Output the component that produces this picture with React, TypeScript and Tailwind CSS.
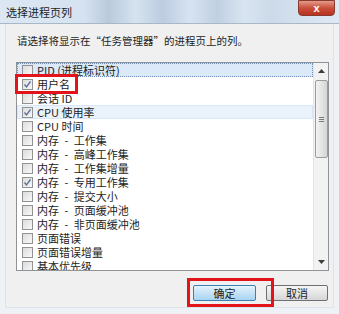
import { FC } from "react";

type Row = { label: string; checked?: boolean; selected?: boolean; hover?: boolean };

const rows: Row[] = [
  { label: "PID (进程标识符)", selected: true },
  { label: "用户名", checked: true },
  { label: "会话 ID" },
  { label: "CPU 使用率", checked: true, hover: true },
  { label: "CPU 时间" },
  { label: "内存\u2002-\u2002工作集" },
  { label: "内存\u2002-\u2002高峰工作集" },
  { label: "内存\u2002-\u2002工作集增量" },
  { label: "内存\u2002-\u2002专用工作集", checked: true },
  { label: "内存\u2002-\u2002提交大小" },
  { label: "内存\u2002-\u2002页面缓冲池" },
  { label: "内存\u2002-\u2002非页面缓冲池" },
  { label: "页面错误" },
  { label: "页面错误增量" },
  { label: "基本优先级" },
];

const CheckBox: FC<{ checked?: boolean }> = ({ checked }) => (
  <div className="w-[11px] h-[11px] shrink-0 border border-[#939393] bg-[linear-gradient(135deg,#dcdcdc,#f8f8f8)] flex items-center justify-center">
    {checked && (
      <svg width="9" height="9" viewBox="0 0 9 9">
        <polyline points="1.5,4.5 3.5,7 7.5,1.5" fill="none" stroke="#5a6f9c" strokeWidth="1.3" />
      </svg>
    )}
  </div>
);

const ListRow: FC<{ row: Row }> = ({ row }) => {
  let bg = "border border-transparent";
  if (row.selected) bg = "border border-dotted border-[#6d8fb8] bg-[#dbe9f8]";
  else if (row.hover) bg = "border border-[#d8e6f5] bg-[#eaf3fc]";
  return (
    <div className={`h-[14px] flex items-center shrink-0 ${bg}`}>
      <div className="ml-[4px]">
        <CheckBox checked={row.checked} />
      </div>
      <span className="ml-[4px] whitespace-pre text-[11px] leading-[12px] text-[#1c1c1c]">
        {row.label}
      </span>
    </div>
  );
};

const ScrollBar: FC = () => (
  <div className="w-[15px] shrink-0 bg-[#f2f2f2] border-l border-[#e4e4e4] flex flex-col items-center">
    <div className="h-[16px] w-full flex items-center justify-center">
      <svg width="7" height="4" viewBox="0 0 7 4">
        <polygon points="0,4 3.5,0 7,4" fill="#3d3d3d" />
      </svg>
    </div>
    <div className="mt-[1px] h-[78px] w-[13px] rounded-[2px] border border-[#9c9c9c] bg-[linear-gradient(90deg,#f3f3f3,#e2e2e2_60%,#d4d4d4)] flex flex-col items-center justify-center gap-[1px]">
      <div className="w-[5px] h-px bg-[#7a7a7a]" />
      <div className="w-[5px] h-px bg-[#7a7a7a]" />
      <div className="w-[5px] h-px bg-[#7a7a7a]" />
    </div>
    <div className="flex-1" />
    <div className="h-[16px] w-full flex items-center justify-center">
      <svg width="7" height="4" viewBox="0 0 7 4">
        <polygon points="0,0 7,0 3.5,4" fill="#3d3d3d" />
      </svg>
    </div>
  </div>
);

export default function App() {
  return (
    <div className="w-[339px] h-[314px] relative overflow-hidden bg-[#eef2f7] flex flex-col font-['Noto_Sans_CJK_SC',sans-serif]">
      {/* title bar */}
      <div className="h-[24px] shrink-0 flex items-start bg-[linear-gradient(90deg,#dce7f3_0%,#d5e2f0_25%,#b9cadc_32%,#d6e2ef_40%,#bccde0_48%,#d7e3f0_56%,#c0d0e2_64%,#d8e4f1_72%,#ccdae9_80%,#dfe9f4_100%)] border-b border-[#a9b8c9]">
        <span className="ml-[6px] mt-[5px] text-[11px] leading-[14px] text-[#1e1e1e]">选择进程页列</span>
        <div className="ml-auto mr-[4px] w-[37px] h-[16px] rounded-b-[4px] border border-[#8a3a30] bg-[linear-gradient(180deg,#e49a8a,#c8503c_50%,#b8321f)] flex items-center justify-center">
          <span className="text-white text-[11px] leading-none font-bold font-['Liberation_Sans',sans-serif]">x</span>
        </div>
      </div>

      {/* body */}
      <div className="mx-[5px] h-[284px] shrink-0 bg-[#f0f0f0] border-x border-b border-[#dde3ea] flex flex-col">
        <div className="pt-[10px] pl-[11px] text-[10.5px] leading-[14px] text-[#1c1c1c]">
          请选择将显示在“任务管理器”的进程页上的列。
        </div>

        <div className="mt-[14px] ml-[10px] w-[313px] h-[209px] border border-[#8e9398] bg-white flex overflow-hidden">
          <div className="flex-1 flex flex-col overflow-hidden">
            {rows.map((r) => (
              <ListRow key={r.label} row={r} />
            ))}
          </div>
          <ScrollBar />
        </div>

        <div className="mt-[14px] flex justify-end gap-[10px] pr-[5px]">
          <button className="w-[63px] h-[16px] border border-[#3c7fb1] rounded-[2px] bg-[linear-gradient(180deg,#e6f3fc,#c4e2f7_50%,#a9d5f2)] text-[11px] leading-none text-[#1c1c1c]">
            确定
          </button>
          <button className="w-[62px] h-[16px] border border-[#707070] rounded-[2px] bg-[linear-gradient(180deg,#f5f5f5,#e6e6e6_50%,#d6d6d6)] text-[11px] leading-none text-[#1c1c1c]">
            取消
          </button>
        </div>
      </div>

      {/* red annotation boxes */}
      <div className="absolute left-[15px] top-[74px] w-[63px] h-[20px] border-[3px] border-[#e3131b]" />
      <div className="absolute left-[187px] top-[278px] w-[87px] h-[29px] border-[3px] border-[#e3131b]" />
    </div>
  );
}
